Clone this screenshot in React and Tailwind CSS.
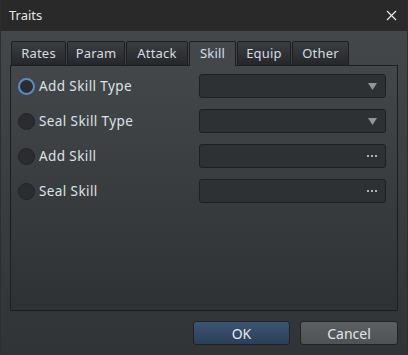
import React from 'react'
import { X } from 'lucide-react'

const tabs = [
    { name: 'Rates', w: 'w-[55px]' },
    { name: 'Param', w: 'w-[58px]' },
    { name: 'Attack', w: 'w-[62px]' },
    { name: 'Skill', w: 'w-[47px]' },
    { name: 'Equip', w: 'w-[54px]' },
    { name: 'Other', w: 'w-[57px]' },
]

const rows = [
    { label: 'Add Skill Type', kind: 'select', focus: true },
    { label: 'Seal Skill Type', kind: 'select' },
    { label: 'Add Skill', kind: 'dots' },
    { label: 'Seal Skill', kind: 'dots' },
]

export default function App() {
    return (
        <div
            className="w-[408px] h-[355px] flex flex-col bg-gradient-to-b from-[#46494c] to-[#313437] border-x border-[#2c2e30] text-[13px] text-[#dfe3e7] overflow-hidden"
            style={{ fontFamily: '"Noto Sans", "Open Sans", sans-serif' }}
        >
            {/* title bar */}
            <div className="h-[31px] shrink-0 bg-[#292929] flex items-center justify-between pl-[9px] pr-[8px] -mx-px">
                <span className="text-[13px] text-[#e6e6e6]">Traits</span>
                <X className="w-[17px] h-[17px] text-[#f0f0f0]" strokeWidth={1.6} />
            </div>

            <div className="flex-1 flex flex-col pt-[10px] pl-[9px] pr-[9px]">
                {/* tabs */}
                <div className="flex h-[24px] pl-px relative z-10">
                    {tabs.map((t) => {
                        const sel = t.name === 'Skill'
                        return (
                            <div
                                key={t.name}
                                className={`${t.w} h-[25px] flex items-center justify-center rounded-t-[2px] border border-[#1c1d1f] mr-px tracking-[0.2px] ${
                                    sel
                                        ? 'bg-[#44474a] border-b-0 text-[#cfe0ee]'
                                        : 'bg-gradient-to-b from-[#3b3e41] to-[#25272a] h-[24px] text-[#d5dce2]'
                                }`}
                            >
                                {t.name}
                            </div>
                        )
                    })}
                </div>

                {/* panel */}
                <div className="h-[246px] border border-[#1c1d1f] bg-gradient-to-b from-[#44474a] to-[#2f3235] flex flex-col gap-[11px] pt-[8px] pl-[7px] pr-[11px]">
                    {rows.map((r) => (
                        <div key={r.label} className="flex items-center h-[24px]">
                            <div
                                className={`w-[17px] h-[17px] rounded-full bg-[#2a2c2f] ${
                                    r.focus ? 'border-2 border-[#5a8dc4]' : 'border border-[#222325]'
                                }`}
                            />
                            <span className="ml-[4px] w-[160px] text-[13.5px] tracking-[0.4px] text-[#dde2e7]">{r.label}</span>
                            <div className="flex-1 h-[24px] rounded-[3px] border border-[#1e1f21] bg-[#2e3134] flex items-center justify-end pr-[6px]">
                                {r.kind === 'select' ? (
                                    <svg width="9" height="7" viewBox="0 0 9 7" className="mr-[2px]">
                                        <path d="M0 0 H9 L4.5 7 Z" fill="#8f969c" />
                                    </svg>
                                ) : (
                                    <svg width="12" height="2" viewBox="0 0 12 2">
                                        <rect x="0" y="0" width="2" height="2" fill="#aeb4ba" />
                                        <rect x="4" y="0" width="2" height="2" fill="#aeb4ba" />
                                        <rect x="8" y="0" width="2" height="2" fill="#aeb4ba" />
                                    </svg>
                                )}
                            </div>
                        </div>
                    ))}
                </div>

                {/* buttons */}
                <div className="flex justify-end gap-[10px] mt-[10px] pr-0">
                    <button className="w-[97px] h-[24px] rounded-[3px] border border-[#1e2227] bg-gradient-to-b from-[#3b5573] to-[#2b3f57] text-[14px] text-[#e2e8ee]">
                        OK
                    </button>
                    <button className="w-[98px] h-[24px] rounded-[3px] border border-[#202224] bg-gradient-to-b from-[#5d6063] to-[#4f5255] text-[14px] text-[#e2e6ea]">
                        Cancel
                    </button>
                </div>
            </div>
        </div>
    )
}
